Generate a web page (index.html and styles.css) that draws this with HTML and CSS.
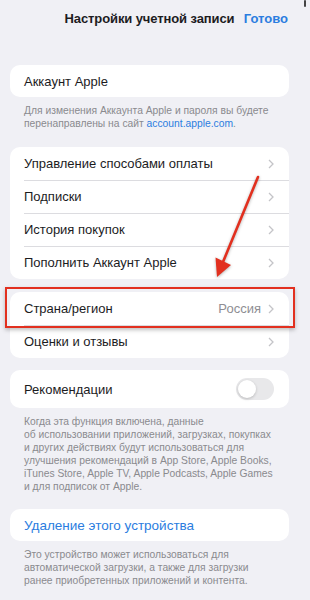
FILE: index.html
```html
<!DOCTYPE html>
<html lang="ru">
<head>
<meta charset="utf-8">
<link rel="stylesheet" href="styles.css">
</head>
<body>
<div class="page">
  <header class="nav">
    <span></span>
    <h1 class="nav-title">Настройки учетной записи</h1>
    <span class="nav-done">Готово</span>
  </header>

  <section class="card card-first">
    <div class="row row-short"><span class="label">Аккаунт Apple</span></div>
  </section>
  <p class="note">Для изменения Аккаунта Apple и пароля вы будете перенаправлены на сайт <span class="link">account.apple.com</span>.</p>

  <section class="card card-pay">
    <div class="row"><span class="label">Управление способами оплаты</span><svg class="chev" viewBox="0 0 6 10"><polyline points="1,1 5,5 1,9"/></svg></div>
    <div class="row"><span class="label">Подписки</span><svg class="chev" viewBox="0 0 6 10"><polyline points="1,1 5,5 1,9"/></svg></div>
    <div class="row"><span class="label">История покупок</span><svg class="chev" viewBox="0 0 6 10"><polyline points="1,1 5,5 1,9"/></svg></div>
    <div class="row"><span class="label">Пополнить Аккаунт Apple</span><svg class="chev" viewBox="0 0 6 10"><polyline points="1,1 5,5 1,9"/></svg></div>
  </section>

  <section class="card card-region">
    <div class="row row-marked"><span class="label">Страна/регион</span><span class="value">Россия</span><svg class="chev" viewBox="0 0 6 10"><polyline points="1,1 5,5 1,9"/></svg><span class="mark"></span></div>
    <div class="row"><span class="label">Оценки и отзывы</span><svg class="chev" viewBox="0 0 6 10"><polyline points="1,1 5,5 1,9"/></svg></div>
  </section>

  <section class="card card-rec">
    <div class="row row-toggle"><span class="label">Рекомендации</span><span class="toggle"><span class="knob"></span></span></div>
  </section>
  <p class="note">Когда эта функция включена, данные<br>об использовании приложений, загрузках, покупках и других действиях будут использоваться для улучшения рекомендаций в App Store, Apple Books, iTunes Store, Apple TV, Apple Podcasts, Apple Games и для подписок от Apple.</p>

  <section class="card card-remove">
    <div class="row row-short"><span class="label link-label">Удаление этого устройства</span></div>
  </section>
  <p class="note">Это устройство может использоваться для автоматической загрузки, а также для загрузки ранее приобретенных приложений и контента.</p>

  <svg class="arrow" viewBox="0 0 310 600" width="310" height="600">
    <line x1="258" y1="177" x2="223" y2="262"/>
    <polygon points="217,277 215.5,257.5 231,265"/>
  </svg>
  <span class="corner"></span>
</div>
</body>
</html>
```

FILE: styles.css
```css
* { box-sizing: border-box; }
html, body { margin: 0; padding: 0; }
body {
  background: #f0f0f5;
  font-family: "Liberation Sans", Arial, sans-serif;
  color: #1c1c1e;
  width: 310px;
  height: 600px;
  overflow: hidden;
}
.page {
  position: relative;
  padding: 0 21px 0 10px;
  height: 600px;
}
.nav {
  height: 36px;
  display: grid;
  grid-template-columns: 1fr auto 1fr;
  align-items: center;
}
.nav-title {
  margin: 0;
  font-size: 13px;
  font-weight: 700;
  letter-spacing: -0.1px;
}
.nav-done {
  justify-self: end;
  font-size: 13px;
  font-weight: 700;
  color: #2b7de0;
  margin-right: 1px;
}
.card {
  background: #fff;
  border-radius: 10px;
}
.card-first { margin-top: 29px; }
.card-pay { margin-top: 17px; }
.card-region { margin-top: 13px; }
.card-rec { margin-top: 12px; }
.card-remove { margin-top: 16px; }

.row {
  position: relative;
  height: 33px;
  display: flex;
  align-items: center;
  padding: 0 15px 0 14px;
  font-size: 13px;
}
.row + .row::before {
  content: "";
  position: absolute;
  left: 14px;
  right: 0;
  top: 0;
  border-top: 0.6px solid #dcdce0;
}
.row-short { height: 32px; }
.row-toggle { height: 38px; }
.label { flex: 1; }
.value { color: #8e8e93; margin-right: 7px; }
.chev {
  width: 6px;
  height: 10px;
  fill: none;
  stroke: #c4c4c8;
  stroke-width: 1.3;
}
.link-label { color: #2b7de0; font-size: 13.5px; }
.note {
  margin: 0;
  padding: 7px 10px 0 14px;
  font-size: 10.3px;
  line-height: 13px;
  color: #8a8a8e;
}
.link { color: #2b7de0; }

.toggle {
  width: 38px;
  height: 22px;
  border-radius: 11px;
  background: #e8e8ea;
  position: relative;
}
.knob {
  position: absolute;
  left: 2px;
  top: 2px;
  width: 18px;
  height: 18px;
  border-radius: 50%;
  background: #fff;
  box-shadow: 0 1px 3px rgba(0,0,0,0.2);
}
.mark {
  position: absolute;
  left: -5px;
  right: -6px;
  top: -5px;
  bottom: -3px;
  border: 2.5px solid #e2301f;
  box-shadow: 0 2px 4px rgba(0,0,0,0.25);
  pointer-events: none;
}
.arrow {
  position: absolute;
  left: 0;
  top: 0;
  pointer-events: none;
  filter: drop-shadow(0 1px 1.5px rgba(0,0,0,0.3));
}
.arrow line {
  stroke: #e2301f;
  stroke-width: 2.6;
  stroke-linecap: round;
}
.arrow polygon { fill: #e2301f; }
.corner {
  position: absolute;
  right: 4px;
  top: 0;
  width: 2px;
  height: 7px;
  background: #444;
  border-radius: 1px;
}
```
